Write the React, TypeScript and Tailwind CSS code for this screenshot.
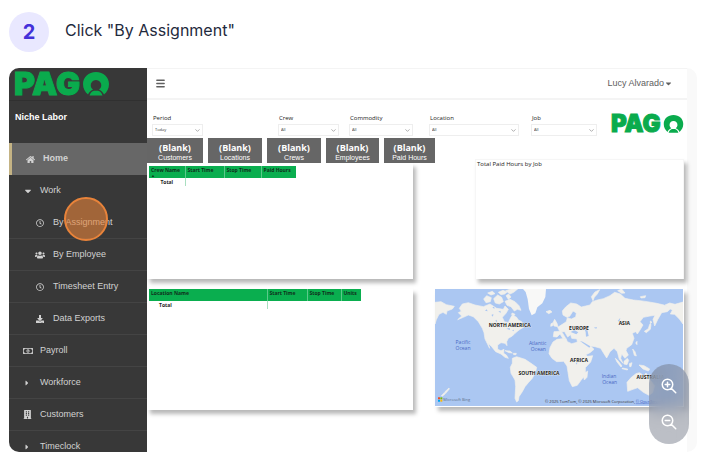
import React from "react";
import { FaHome, FaRegClock, FaUsers, FaDownload, FaRegMoneyBillAlt, FaBuilding, FaCaretDown, FaCaretRight } from "react-icons/fa";
import { Menu, ChevronDown } from "lucide-react";
import { HiOutlineZoomIn, HiOutlineZoomOut } from "react-icons/hi";

function PersonRing({ className }: { className: string }) {
  return (
    <svg viewBox="0 0 26 24" className={className} aria-hidden="true">
      <path
        fill="#0aab4d"
        fillRule="evenodd"
        d="M13 0C20.500 0 26 5 26 12c0 4.500-2 8-5 10.500C20 20.500 18.500 18.800 16 17.600a5.300 5.300 0 1 0-6 0C7.500 18.800 6 20.500 5 22.500 2 20 0 16.500 0 12 0 5 5.500 0 13 0Z"
      />
      <path fill="#0aab4d" d="M6.500 23.500c.8-2.800 2.500-4.300 4.500-4.800h4c2 .5 3.700 2 4.500 4.800Z" />
    </svg>
  );
}

function Logo({ large = false }: { large?: boolean }) {
  return (
    <div className="flex items-center gap-0.5 font-['Inter',sans-serif] font-black text-[#0aab4d] [-webkit-text-stroke:1px_#0aab4d]">
      <span className={large ? "text-[32px] leading-none" : "text-[24px] leading-none"}>PAG</span>
      <PersonRing className={large ? "h-6 w-7 shrink-0" : "h-[18px] w-[21px] shrink-0"} />
    </div>
  );
}

type Item = { label: string; icon: React.ReactNode; nested?: boolean; target?: boolean };

const items: Item[] = [
  { label: "Work", icon: <FaCaretDown size={10} /> },
  { label: "By Assignment", icon: <FaRegClock size={8} />, nested: true, target: true },
  { label: "By Employee", icon: <FaUsers size={10} />, nested: true },
  { label: "Timesheet Entry", icon: <FaRegClock size={8} />, nested: true },
  { label: "Data Exports", icon: <FaDownload size={8} />, nested: true },
  { label: "Payroll", icon: <FaRegMoneyBillAlt size={10} /> },
  { label: "Workforce", icon: <FaCaretRight size={8} /> },
  { label: "Customers", icon: <FaBuilding size={9} /> },
  { label: "Timeclock", icon: <FaCaretRight size={8} /> },
];

function Sidebar() {
  return (
    <aside className="flex w-[138px] shrink-0 flex-col rounded-l-[10px] bg-[#383838] text-[9px] text-[#d2d2d2]">
      <div className="flex h-8 shrink-0 items-center pl-[5px]">
        <Logo large />
      </div>
      <div className="h-[43px] shrink-0 border-t border-[#303030] px-1.5 pt-2.5 font-bold leading-3 text-white">Niche Labor</div>
      <nav className="min-h-0 flex-1 overflow-hidden rounded-bl-[10px]">
        <a href="#home" className="flex h-8 items-center border-l-[3px] border-[#c4b384] bg-[#676767] pl-3.5 font-bold">
          <span className="w-[17px]"><FaHome size={9} /></span>
          Home
        </a>
        {items.map((it) => (
          <a
            key={it.label}
            href="#section"
            className={`relative flex h-8 items-center ${it.label === "Work" ? "" : "border-b border-[#444444]"} ${it.nested ? "pl-[26px]" : "pl-3.5"}`}
          >
            <span className={`flex shrink-0 ${it.nested ? "w-[18px]" : "w-[17px]"}`}>
              <span className={`flex w-2.5 ${it.nested ? "justify-center" : ""}`}>{it.icon}</span>
            </span>
            {it.label}
            {it.target && (
              <span className="absolute -top-2.5 left-[55px] size-11 rounded-full border-2 border-[#e8833a] bg-[#e8833a]/60" />
            )}
          </a>
        ))}
      </nav>
    </aside>
  );
}

function Filter({ label, value = "All", className }: { label: string; value?: string; className: string }) {
  const id = `filter-${label}`;
  return (
    <div className={className}>
      <label htmlFor={id} className="block pb-0.5 pl-px text-[6px] leading-2 text-[#222222]">{label}</label>
      <div className="grid items-center">
        <select id={id} className="col-start-1 row-start-1 h-3 w-full appearance-none border border-[#eeeeee] bg-white px-0.5 text-[4px] leading-2 text-[#333333]">
          <option>{value}</option>
        </select>
        <ChevronDown size={7} strokeWidth={2} className="pointer-events-none col-start-1 row-start-1 mr-0.5 justify-self-end text-[#777777]" />
      </div>
    </div>
  );
}

const kpis = ["Customers", "Locations", "Crews", "Employees", "Paid Hours"];

function DataTable({ heads, widths, sorted = false }: { heads: string[]; widths: string[]; sorted?: boolean }) {
  return (
    <table className="ml-0.5 table-fixed border-collapse text-left text-[5px] font-bold text-[#10301c]">
      <thead>
        <tr className="h-3 bg-[#0aae4f]">
          {heads.map((h, i) => (
            <th key={h} className={`${widths[i]} ${i > 0 ? "border-l border-[#5cc98a]" : ""} p-0 pl-0.5 align-top leading-2 whitespace-nowrap`}>
              {h}
              {sorted && i === 0 && <span className="block h-0 text-[4px] leading-1">▲</span>}
            </th>
          ))}
        </tr>
      </thead>
      <tbody>
        <tr className="h-2">
          <td className={`p-0 leading-2 text-[#222222] ${sorted ? "text-center" : "pl-2.5"}`}>Total</td>
          <td className="border-l border-[#a9dfc0] p-0" />
        </tr>
      </tbody>
    </table>
  );
}

function WorldMap() {
  return (
    <svg viewBox="0 0 744 351" preserveAspectRatio="none" className="block h-full w-full bg-[#abc7f2]" role="img" aria-label="World map">
      <g fill="#f1f0ec" stroke="#f1f0ec" strokeWidth="2" strokeLinejoin="round">
        <path d="M0 40 18 38 34 47 58 52 52 60 36 66 34 76 24 70 12 76 4 92 0 105Z" />
        <path d="M73 58 82 45 100 41 120 48 145 53 165 45 185 58 205 61 210 51 220 61 213 73 202 85 208 98 220 101 226 88 232 78 245 85 250 93 260 98 268 113 252 123 240 133 232 141 220 148 215 158 216 170 210 163 198 161 188 168 188 181 198 185 207 181 206 193 214 198 220 208 210 205 198 195 182 188 170 173 160 163 164 178 150 150 147 131 142 118 130 98 115 83 100 78 85 85 68 92 80 81 70 71 79 67Z" />
        <path d="M146 30 155 20 169 26 166 38 153 41ZM176 29 188 18 200 25 205 38 193 45 181 42ZM158 12 172 7 180 14 168 18ZM190 10 204 4 216 9 209 15 198 17ZM213 20 221 15 228 24 220 31ZM210 37 225 31 240 38 252 50 258 64 247 61 238 66 228 53 216 49ZM212 5 228 0 248 0 236 10 225 15ZM232 72 240 76 237 80 229 76Z" />
        <path d="M210 185 225 186 232 192 222 191ZM235 193 244 193 243 197 236 197Z" />
        <path d="M232 208 245 203 270 211 288 223 305 235 302 248 292 268 280 281 270 293 262 308 252 323 250 335 245 339 240 328 242 293 240 273 228 253 226 235 232 223Z" />
        <path d="M333 68 345 64 351 69 341 74ZM357 111 354 101 359 91 366 103 369 113ZM348 104 354 102 353 110 347 112Z" />
        <path d="M354 159 366 151 393 148 397 158 410 164 426 160 436 163 441 181 449 196 458 202 473 200 467 219 451 236 451 257 438 274 427 289 412 293 403 275 399 250 396 231 386 217 365 218 351 208 342 194 345 176ZM451 251 458 246 456 265 448 273 446 265Z" />
        <path d="M355 143 357 128 374 127 368 115 382 106 394 98 397 86 409 90 422 84 424 72 414 66 404 82 396 85 384 78 382 66 392 54 407 42 425 45 439 54 452 51 465 48 472 38 487 33 505 29 525 20 539 10 556 15 570 28 595 33 615 35 637 38 665 43 687 48 708 58 697 68 680 71 668 92 659 111 654 91 660 79 645 81 625 85 615 98 624 108 615 123 607 135 602 128 592 133 597 148 590 167 575 178 573 185 580 198 570 208 560 195 557 208 564 223 553 211 547 188 537 178 525 188 515 207 505 191 497 178 480 173 467 171 477 181 465 191 449 199 438 183 427 163 426 150 410 148 407 137 398 144 389 128 380 128 391 146 384 149 375 135 366 144Z" />
        <path d="M474 35 469 23 480 9 494 2 487 15 478 25ZM548 5 560 0 570 12 560 13ZM616 23 632 20 630 26 618 27ZM628 127 640 119 644 106 648 106 646 121 634 131ZM646 96 651 100 646 104ZM602 162 606 157 606 167Z" />
        <path d="M541 208 548 214 561 231 558 234 546 219ZM567 217 577 208 581 214 576 227 567 225ZM562 237 578 240 577 243 561 239ZM583 224 591 221 588 233 584 233ZM593 180 600 188 604 201 598 199ZM612 228 627 230 644 240 640 246 624 240Z" />
        <path d="M576 280 589 265 603 254 613 251 621 256 624 265 633 252 640 266 659 290 653 311 642 319 625 310 608 296 594 301 578 307Z" />
        <path d="M690 48 704 42 720 46 744 39V105L733 90 719 76 706 75 712 64ZM29 309 42 297 43 300 32 313ZM19 320 28 311 31 314 22 322Z" />
      </g>
      <path d="M264 0 272 9 278 31 282 60 290 79 301 73 307 55 322 43 331 24 333 0Z" fill="#f8f8f7" />
      <g fill="#abc7f2">
        <path d="M407 129 418 123 430 130 424 136ZM449 120 457 122 461 141 453 143 452 130ZM435 156 443 158 466 172 463 176 446 164Z" />
        <path d="M150 65 155 61 158 67ZM169 78 175 75 174 83ZM181 95 185 92 187 101ZM214 119 224 117 225 123ZM231 124 236 122 237 127ZM476 116 486 114 484 119ZM548 96 556 86 553 98ZM422 222 427 220 426 227ZM172 55 178 53 178 60ZM190 68 196 65 198 71Z" />
      </g>
      <g fontFamily="'Open Sans', sans-serif" fontSize="15" fontWeight="700" fill="#222222" stroke="#f1f0ec" strokeWidth="2" paintOrder="stroke" textAnchor="middle">
        <text x="224" y="114">NORTH AMERICA</text>
        <text x="312" y="259">SOUTH AMERICA</text>
        <text x="432" y="122">EUROPE</text>
        <text x="568" y="109">ASIA</text>
        <text x="432" y="218">AFRICA</text>
        <text x="646" y="269">AUSTRALIA</text>
      </g>
      <g fontFamily="'Open Sans', sans-serif" fontSize="15" fill="#4967c4" textAnchor="middle">
        <text x="84" y="165">Pacific</text><text x="84" y="182">Ocean</text>
        <text x="308" y="169">Atlantic</text><text x="310" y="186">Ocean</text>
        <text x="522" y="266">Indian</text><text x="524" y="284">Ocean</text>
      </g>
      <path fill="#f25022" d="M9 325h6v6H9z" /><path fill="#7fba00" d="M16 325h6v6h-6z" /><path fill="#00a4ef" d="M9 332h6v6H9z" /><path fill="#ffb900" d="M16 332h6v6h-6z" />
      <g fontFamily="'Open Sans', sans-serif" fontSize="12" fill="#333333">
        <text x="25" y="336" fill="#60708c">Microsoft Bing</text>
        <text x="330" y="341">© 2025 TomTom, © 2025 Microsoft Corporation,</text>
        <text x="602" y="341" fill="#3455bf" textDecoration="underline">© OpenStreetMap</text>
      </g>
    </svg>
  );
}

const panel = "bg-white shadow-[3px_4px_4px_rgba(0,0,0,0.28)]";

function Report() {
  return (
    <div className="font-['Open_Sans',sans-serif]">
      <div className="grid h-[38px] grid-cols-[126fr_71fr_80fr_102fr_80fr_76fr] items-start pt-3.5 pl-[5px]">
        <Filter label="Period" value="Today" className="mr-[75px]" />
        <Filter label="Crew" className="mr-2.5" />
        <Filter label="Commodity" className="mr-4" />
        <Filter label="Location" className="mr-3" />
        <Filter label="Job" className="mr-3.5" />
        <div className="-mt-0.5"><Logo /></div>
      </div>
      <div className="flex pr-[3px]">
        <div className="flex flex-[288] flex-col">
          <div className="grid grid-cols-[61fr_59fr_59fr_58fr_51fr] text-center text-white">
            {kpis.map((k) => (
              <div key={k} className="mr-[5px] flex h-[25px] flex-col justify-end bg-[#666666] last:mr-0">
                <strong className="text-[9px] leading-3">(Blank)</strong>
                <span className="pb-px font-['Liberation_Sans',sans-serif] text-[7px] leading-2">{k}</span>
              </div>
            ))}
          </div>
          <section className={`mr-[22px] mb-2.5 h-[116px] pt-[3px] ${panel}`}>
            <DataTable sorted heads={["Crew Name", "Start Time", "Stop Time", "Paid Hours"]} widths={["w-9", "w-[39px]", "w-[37px]", "w-[35px]"]} />
          </section>
          <section className={`mr-[22px] h-[121px] ${panel}`}>
            <DataTable heads={["Location Name", "Start Time", "Stop Time", "Units"]} widths={["w-[118px]", "w-10", "w-[34px]", "w-5"]} />
          </section>
        </div>
        <div className="flex flex-[249] flex-col pt-[21px]">
          <section className={`mb-2.5 ml-10 h-[120px] ${panel} border border-[#f6f6f6] border-b-0`}>
            <h2 className="pl-px text-[6px] leading-2 text-[#222222]">Total Paid Hours by Job</h2>
          </section>
          <section className={`h-[118px] pr-px pb-px ${panel}`}>
            <WorldMap />
          </section>
        </div>
      </div>
    </div>
  );
}

export default function App() {
  return (
    <div className="bg-white px-[9px] pr-[7px] pt-3 font-['Liberation_Sans',Arial,sans-serif]">
      <header className="mb-4 flex h-10 items-center gap-4 font-['Inter',sans-serif]">
        <span className="flex size-10 items-center justify-center rounded-full bg-[#e9e8ff] text-[20px] font-bold text-[#4330d9]">2</span>
        <h1 className="pb-1 text-[16px] leading-6 text-[#1f2a3d]">Click "By Assignment"</h1>
      </header>
      <main className="relative flex h-96 rounded-[10px] bg-[#f9f9f9]">
        <Sidebar />
        <div className="mr-2.5 min-w-0 flex-1 bg-white">
          <div className="flex h-8 items-center justify-between border-t border-b-2 border-[#f4f4f4] pr-3.5 pl-2 text-[9px] text-[#606060]">
            <button aria-label="Toggle menu"><Menu size={11} strokeWidth={3} /></button>
            <button className="flex items-center">Lucy Alvarado <FaCaretDown size={9} /></button>
          </div>
          <Report />
        </div>
        <div className="absolute right-2 bottom-2 flex h-20 w-10 flex-col items-center justify-around rounded-full bg-[#6b7280]/45 py-1 text-white backdrop-blur-sm">
          <button aria-label="Zoom in"><HiOutlineZoomIn size={18} /></button>
          <button aria-label="Zoom out"><HiOutlineZoomOut size={18} /></button>
        </div>
      </main>
    </div>
  );
}
